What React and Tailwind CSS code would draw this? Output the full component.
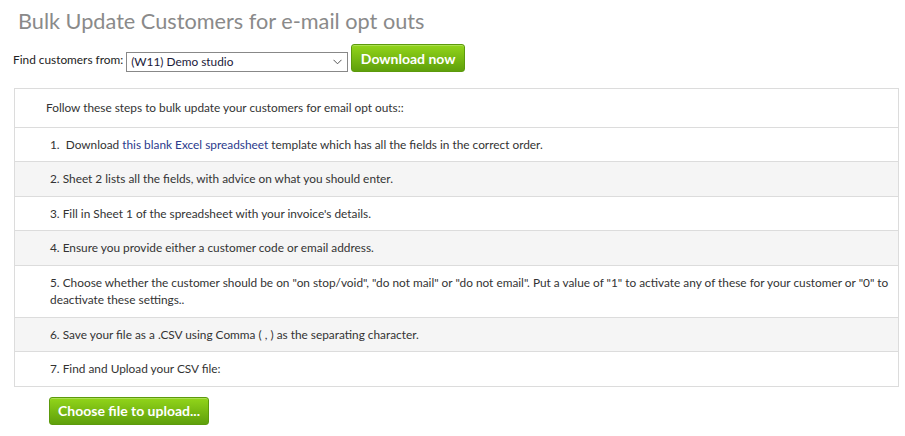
import React from 'react';

const steps = [
  { id: 1, bg: 'bg-white', content: (
    <>
      1.&nbsp; Download <a href="#" className="text-[#2b3a8c]">this blank Excel spreadsheet</a> template which has all the fields in the correct order.
    </>
  ) },
  { id: 2, bg: 'bg-[#f5f5f5]', content: '2. Sheet 2 lists all the fields, with advice on what you should enter.' },
  { id: 3, bg: 'bg-white', content: "3. Fill in Sheet 1 of the spreadsheet with your invoice's details." },
  { id: 4, bg: 'bg-[#f5f5f5]', content: '4. Ensure you provide either a customer code or email address.' },
  { id: 5, bg: 'bg-white', content: '5. Choose whether the customer should be on "on stop/void", "do not mail" or "do not email". Put a value of "1" to activate any of these for your customer or "0" to deactivate these settings..' },
  { id: 6, bg: 'bg-[#f5f5f5]', content: '6. Save your file as a .CSV using Comma ( , ) as the separating character.' },
  { id: 7, bg: 'bg-white', content: '7. Find and Upload your CSV file:' },
];

const greenBtn = 'rounded-[3px] border border-[#5c9a0c] bg-gradient-to-b from-[#92d51a] to-[#5fa00b] font-bold text-white shadow-[inset_0_1px_0_rgba(255,255,255,0.25)]';

const App = () => {
  return (
    <div className="min-h-[436px] bg-white font-['Lato','Open_Sans',sans-serif] text-[#333]">
      <h1 className="pl-[18px] pt-[8px] text-[21.7px] leading-[27px] text-[#8a8a8a]">
        Bulk Update Customers for e-mail opt outs
      </h1>

      {/* Find customers */}
      <div className="mt-[9px] flex items-end pl-[13px]">
        <span className="pb-[4px] text-[11.85px] leading-[16px] text-[#222]">Find customers from:</span>
        <div className="ml-[3px] flex h-[20px] w-[222px] items-center justify-between border border-[#888] bg-white pl-[4px] pr-[5px]">
          <span className="text-[11.85px] text-[#1a1a3a]">(W11) Demo studio</span>
          <svg width="9" height="6" viewBox="0 0 9 6" fill="none" stroke="#555" strokeWidth="1">
            <path d="M0.5 0.8 L4.5 4.8 L8.5 0.8" />
          </svg>
        </div>
        <button className={`${greenBtn} ml-[3px] h-[28px] w-[114px] text-[14px]`}>
          Download now
        </button>
      </div>

      {/* Steps table */}
      <div className="ml-[14px] mt-[16px] w-[885px] border border-[#dcdcdc] text-[11.85px] leading-[17.5px]">
        <div className="border-b border-[#dcdcdc] pb-[10px] pl-[31px] pt-[10px]">
          Follow these steps to bulk update your customers for email opt outs::
        </div>
        {steps.map((step, index) => (
          <div
            key={step.id}
            className={`${step.bg} ${index < steps.length - 1 ? 'border-b border-[#dcdcdc]' : ''} py-[8px] pl-[35px] pr-[2px]`}
          >
            {step.content}
          </div>
        ))}
      </div>

      <div className="pl-[49px] pt-[10px]">
        <button className={`${greenBtn} h-[28px] w-[160px] text-[14px]`}>
          Choose file to upload...
        </button>
      </div>
    </div>
  );
};

export default App;
